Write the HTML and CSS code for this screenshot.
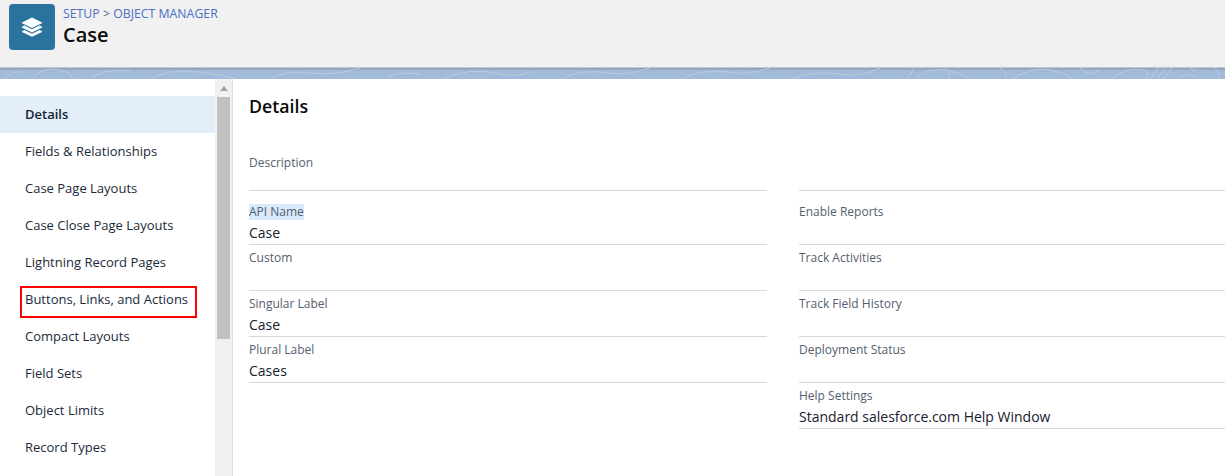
FILE: index.html
```html
<!DOCTYPE html>
<html lang="en">
<head>
<meta charset="utf-8">
<title>Case | Object Manager</title>
<link rel="stylesheet" href="styles.css">
</head>
<body>
<header class="header">
  <div class="header-icon">
    <svg width="22" height="20" viewBox="0 0 22 20" aria-hidden="true">
      <path fill="#fff" d="M11 .5 21 5.4q.5.4 0 .8L11 11 1 6.2q-.5-.4 0-.8z"/>
      <path fill="#fff" d="M3.4 8.600 11 12.300l7.600-3.700 2.400 1.200q.5.400 0 .8L11 15.400 1 10.600q-.5-.4 0-.8z"/>
      <path fill="#fff" d="M3.400 13 11 16.700l7.600-3.700 2.400 1.200q.5.400 0 .8L11 19.800 1 15q-.5-.4 0-.8z"/>
    </svg>
  </div>
  <div class="header-text">
    <div class="crumbs"><a>SETUP</a> <span class="sep">&gt;</span> <a>OBJECT MANAGER</a></div>
    <h1 class="title">Case</h1>
  </div>
</header>
<div class="band">
  <svg class="contours" width="1225" height="12" viewBox="0 0 1225 12" aria-hidden="true">
    <g fill="none" stroke="#b9cbe4" stroke-width="1">
      <path d="M5 12 Q12 2 22 4 M32 12 Q40 -2 60 2 Q75 6 72 12 M90 12 Q100 0 130 3 M150 12 Q165 0 200 4 Q225 8 240 12"/>
      <path d="M270 12 Q280 2 310 5 Q335 8 360 0 M385 12 Q395 2 420 6 M440 12 Q470 -2 500 6 Q515 10 530 4 M560 12 Q580 0 610 5 Q625 8 650 0"/>
      <path d="M680 12 Q700 0 730 4 Q745 8 770 0 M790 12 Q810 2 840 6 Q860 10 880 0 M905 12 Q912 6 914 0 M915 12 Q925 -2 950 3 Q965 6 970 12"/>
      <path d="M945 0 Q952 6 948 12 M1000 0 Q1010 8 1005 12 M1012 12 Q1030 -2 1050 2 Q1070 6 1072 12 M1080 0 Q1090 10 1100 2 M1110 12 Q1125 -2 1145 2 Q1150 6 1146 12"/>
      <path d="M1150 12 L1158 0 M1157 12 L1165 0 M1163 12 L1172 0 M1175 12 Q1190 2 1200 12 M1215 0 Q1222 6 1218 12 M1190 0 Q1195 4 1198 2"/>
    </g>
  </svg>
</div>
<div class="content">
  <aside class="sidebar">
    <ul class="nav">
      <li class="nav-item active">Details</li>
      <li class="nav-item">Fields &amp; Relationships</li>
      <li class="nav-item">Case Page Layouts</li>
      <li class="nav-item">Case Close Page Layouts</li>
      <li class="nav-item">Lightning Record Pages</li>
      <li class="nav-item marked">Buttons, Links, and Actions</li>
      <li class="nav-item">Compact Layouts</li>
      <li class="nav-item">Field Sets</li>
      <li class="nav-item">Object Limits</li>
      <li class="nav-item">Record Types</li>
    </ul>
    <div class="scrollbar">
      <div class="arrow"></div>
      <div class="thumb"></div>
    </div>
  </aside>
  <main class="main">
    <h2 class="heading">Details</h2>
    <div class="fields">
      <div class="col">
        <div class="field first"><div class="label">Description</div></div>
        <div class="field tall"><div class="label"><span class="selected">API Name</span></div><div class="value">Case</div></div>
        <div class="field"><div class="label">Custom</div><div class="value"></div></div>
        <div class="field"><div class="label">Singular Label</div><div class="value">Case</div></div>
        <div class="field"><div class="label">Plural Label</div><div class="value">Cases</div></div>
      </div>
      <div class="col">
        <div class="field first"></div>
        <div class="field tall"><div class="label">Enable Reports</div><div class="value"></div></div>
        <div class="field"><div class="label">Track Activities</div><div class="value"></div></div>
        <div class="field"><div class="label">Track Field History</div><div class="value"></div></div>
        <div class="field"><div class="label">Deployment Status</div><div class="value"></div></div>
        <div class="field"><div class="label">Help Settings</div><div class="value">Standard salesforce.com Help Window</div></div>
      </div>
    </div>
  </main>
</div>
</body>
</html>
```
FILE: styles.css
```css
*, *::after { box-sizing: border-box; }
html, body { margin: 0; padding: 0; height: 100%; overflow: hidden; }
body {
  font-family: "Open Sans", "Liberation Sans", sans-serif;
  color: #16325c;
  background: #fff;
  display: flex;
  flex-direction: column;
}
.header {
  height: 67px;
  flex: none;
  background: #f1f1f1;
  display: flex;
  align-items: flex-start;
  padding: 4px 0 0 9px;
  gap: 8px;
}
.header-icon {
  width: 46px;
  height: 46px;
  border-radius: 4px;
  background: #2a739e;
  display: flex;
  align-items: center;
  justify-content: center;
}
.header-text { padding-top: 1px; }
.crumbs {
  font-size: 12.3px;
  line-height: 18px;
  color: #4a6fc4;
}
.sep { color: #54698d; }
.title {
  margin: 0;
  font-size: 20px;
  line-height: 24px;
  font-weight: 600;
  color: #0a0a0a;
}
.band {
  height: 12px;
  flex: none;
  background: #a3bbdb;
  border-top: 1px solid #c9c7c3;
  box-shadow: inset 0 3px 3px -2px rgba(60, 60, 60, .3);
  overflow: hidden;
}
.contours { display: block; }
.content {
  flex: 1;
  display: flex;
  min-height: 0;
}
.sidebar {
  width: 233px;
  flex: none;
  display: flex;
  border-right: 1px solid #e0e0e0;
}
.nav {
  list-style: none;
  margin: 0;
  padding: 17px 0 0;
  width: 215px;
  flex: none;
}
.nav-item {
  position: relative;
  height: 37px;
  padding-left: 25px;
  font-size: 13px;
  line-height: 37px;
  color: #1a2a3a;
  white-space: nowrap;
}
.nav-item.active {
  background: #e4eef9;
  font-weight: 600;
  color: #0f1f33;
}
.nav-item.marked::after {
  content: "";
  position: absolute;
  left: 20px;
  top: 5px;
  width: 177px;
  height: 32px;
  border: 2px solid #ff0000;
}
.scrollbar {
  flex: 1;
  background: #f1f1f1;
  padding: 0 2px;
}
.arrow {
  width: 0;
  height: 0;
  margin: 7px auto 0;
  border-left: 4px solid transparent;
  border-right: 4px solid transparent;
  border-bottom: 5px solid #a3a3a3;
}
.thumb {
  margin-top: 6px;
  height: 242px;
  background: #c1c1c1;
}
.main {
  flex: 1;
  min-width: 0;
  padding: 14px 0 0 16px;
}
.heading {
  margin: 0;
  font-size: 17.8px;
  line-height: 26px;
  font-weight: 600;
  color: #0a0a0a;
}
.fields {
  display: grid;
  grid-template-columns: 518px 1fr;
  column-gap: 32px;
  margin-top: 26px;
}
.field {
  height: 46px;
  padding-top: 5px;
  border-bottom: 1px solid #d8d8d8;
}
.field.first { height: 46px; padding-top: 10px; }
.field.tall { height: 54px; padding-top: 13px; }
.label {
  font-size: 12px;
  line-height: 16px;
  color: #54606e;
}
.selected { background: #d8eafc; display: inline-block; }
.value {
  margin-top: 3px;
  font-size: 14px;
  line-height: 20px;
  color: #16202e;
}
```
